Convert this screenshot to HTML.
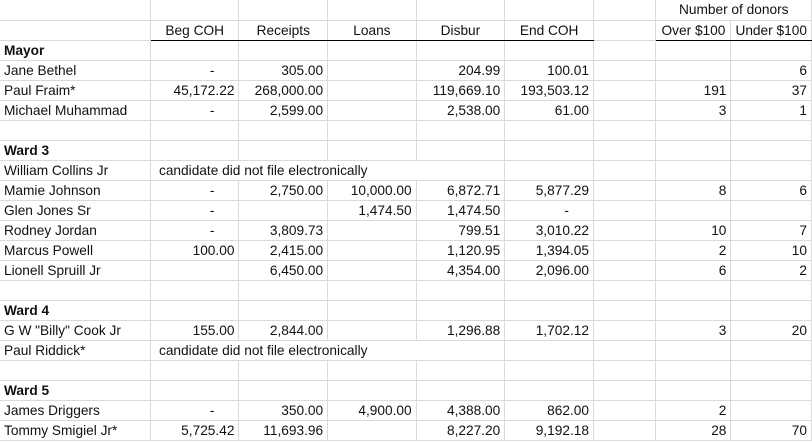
<!DOCTYPE html>
<html><head><meta charset="utf-8"><style>
body{margin:0;background:#fff;width:812px;height:442px;overflow:hidden}
table{border-collapse:collapse;table-layout:fixed;font-family:"Liberation Sans",sans-serif;font-size:13.7px;color:#111}
td{height:19px;padding:1px 4px 0 4px;border-right:1px solid #d9d9d9;border-bottom:1px solid #d9d9d9;white-space:nowrap;overflow:visible;text-align:right;line-height:18px;box-sizing:border-box}
tr{height:20px}
td.l{text-align:left}
td.c{text-align:center}
td.d{text-align:right;padding-right:24px}
tr.h td.k{border-bottom:1px solid #000}
b{font-weight:bold}
</style></head><body>
<table>
<colgroup><col style="width:151px"><col style="width:89px"><col style="width:89px"><col style="width:89px"><col style="width:89px"><col style="width:89px"><col style="width:64px"><col style="width:75px"><col style="width:77px"></colgroup>
<tr><td></td><td></td><td></td><td></td><td></td><td></td><td></td><td class="c" colspan="2">Number of donors</td></tr>
<tr class="h"><td></td><td class="c k">Beg COH</td><td class="c k">Receipts</td><td class="c k">Loans</td><td class="c k">Disbur</td><td class="c k">End COH</td><td></td><td class="c k">Over $100</td><td class="c k">Under $100</td></tr>
<tr><td class="l"><b>Mayor</b></td><td></td><td></td><td></td><td></td><td></td><td></td><td></td><td></td></tr>
<tr><td class="l">Jane Bethel</td><td class="d">-</td><td>305.00</td><td></td><td>204.99</td><td>100.01</td><td></td><td></td><td>6</td></tr>
<tr><td class="l">Paul Fraim*</td><td>45,172.22</td><td>268,000.00</td><td></td><td>119,669.10</td><td>193,503.12</td><td></td><td>191</td><td>37</td></tr>
<tr><td class="l">Michael Muhammad</td><td class="d">-</td><td>2,599.00</td><td></td><td>2,538.00</td><td>61.00</td><td></td><td>3</td><td>1</td></tr>
<tr><td></td><td></td><td></td><td></td><td></td><td></td><td></td><td></td><td></td></tr>
<tr><td class="l"><b>Ward 3</b></td><td></td><td></td><td></td><td></td><td></td><td></td><td></td><td></td></tr>
<tr><td class="l">William Collins Jr</td><td class="l" colspan="4" style="padding-left:8px">candidate did not file electronically</td><td></td><td></td><td></td><td></td></tr>
<tr><td class="l">Mamie Johnson</td><td class="d">-</td><td>2,750.00</td><td>10,000.00</td><td>6,872.71</td><td>5,877.29</td><td></td><td>8</td><td>6</td></tr>
<tr><td class="l">Glen Jones Sr</td><td class="d">-</td><td></td><td>1,474.50</td><td>1,474.50</td><td class="d">-</td><td></td><td></td><td></td></tr>
<tr><td class="l">Rodney Jordan</td><td class="d">-</td><td>3,809.73</td><td></td><td>799.51</td><td>3,010.22</td><td></td><td>10</td><td>7</td></tr>
<tr><td class="l">Marcus Powell</td><td>100.00</td><td>2,415.00</td><td></td><td>1,120.95</td><td>1,394.05</td><td></td><td>2</td><td>10</td></tr>
<tr><td class="l">Lionell Spruill Jr</td><td></td><td>6,450.00</td><td></td><td>4,354.00</td><td>2,096.00</td><td></td><td>6</td><td>2</td></tr>
<tr><td></td><td></td><td></td><td></td><td></td><td></td><td></td><td></td><td></td></tr>
<tr><td class="l"><b>Ward 4</b></td><td></td><td></td><td></td><td></td><td></td><td></td><td></td><td></td></tr>
<tr><td class="l">G W "Billy" Cook Jr</td><td>155.00</td><td>2,844.00</td><td></td><td>1,296.88</td><td>1,702.12</td><td></td><td>3</td><td>20</td></tr>
<tr><td class="l">Paul Riddick*</td><td class="l" colspan="4" style="padding-left:8px">candidate did not file electronically</td><td></td><td></td><td></td><td></td></tr>
<tr><td></td><td></td><td></td><td></td><td></td><td></td><td></td><td></td><td></td></tr>
<tr><td class="l"><b>Ward 5</b></td><td></td><td></td><td></td><td></td><td></td><td></td><td></td><td></td></tr>
<tr><td class="l">James Driggers</td><td class="d">-</td><td>350.00</td><td>4,900.00</td><td>4,388.00</td><td>862.00</td><td></td><td>2</td><td></td></tr>
<tr><td class="l">Tommy Smigiel Jr*</td><td>5,725.42</td><td>11,693.96</td><td></td><td>8,227.20</td><td>9,192.18</td><td></td><td>28</td><td>70</td></tr>
</table>
</body></html>
